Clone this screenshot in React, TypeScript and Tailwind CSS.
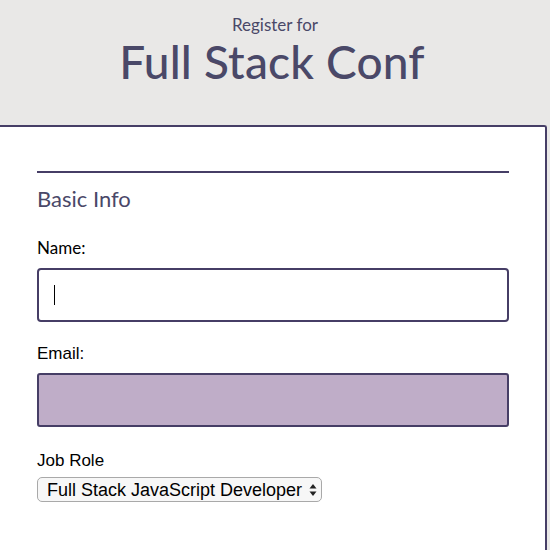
import React from "react";

export default function App() {
  return (
    <main className="min-h-screen w-[550px] h-[550px] overflow-hidden bg-[#e9e8e7] font-['Lato',sans-serif]">
      {/* Header */}
      <header className="h-[125px] flex flex-col items-center pt-[14px] text-[#4a4868]">
        <p className="text-[17px] leading-[22px]">Register for</p>
        <h1 className="text-[46px] leading-[52px] font-medium tracking-[0.2px] -ml-[6px]">Full Stack Conf</h1>
      </header>

      {/* Form card */}
      <div className="w-[547px] h-[430px] bg-white border-t-2 border-r-2 border-[#463e66] rounded-tr-[3px] pt-[44px] pl-[37px]">
        <form className="w-[472px]">
          <div className="h-[2px] bg-[#463e66]" />
          <h2 className="mt-[13px] text-[22px] leading-[26px] text-[#4a4868]">Basic Info</h2>

          <label className="block mt-[26px] text-[17px] leading-[20px] text-black">Name:</label>
          <div className="mt-[10px] h-[54px] border-2 border-[#463e66] rounded-[4px] bg-white flex items-center pl-[15px]">
            <span className="w-px h-[20px] bg-black" />
          </div>

          <label className="block mt-[22px] text-[17px] leading-[20px] text-black font-['Liberation_Sans',sans-serif]">Email:</label>
          <div className="mt-[9px] h-[54px] border-2 border-[#463e66] rounded-[3px] bg-[#bfadc8]" />

          <label className="block mt-[24px] text-[17px] leading-[20px] text-black font-['Liberation_Sans',sans-serif]">Job Role</label>
          <div className="mt-[6px] w-[285px] h-[25px] border border-[#a9a9a9] rounded-[5px] bg-[#f7f7f7] flex items-center justify-between pl-[9px] pr-[4px] font-['Liberation_Sans',sans-serif] text-[18px] leading-[20px] text-black">
            <span>Full Stack JavaScript Developer</span>
            <svg width="8" height="14" viewBox="0 0 8 14">
              <path d="M4 1 L7.5 5.5 L0.5 5.5 Z" fill="#222" />
              <path d="M4 13 L7.5 8.5 L0.5 8.5 Z" fill="#222" />
            </svg>
          </div>
        </form>
      </div>
    </main>
  );
}
